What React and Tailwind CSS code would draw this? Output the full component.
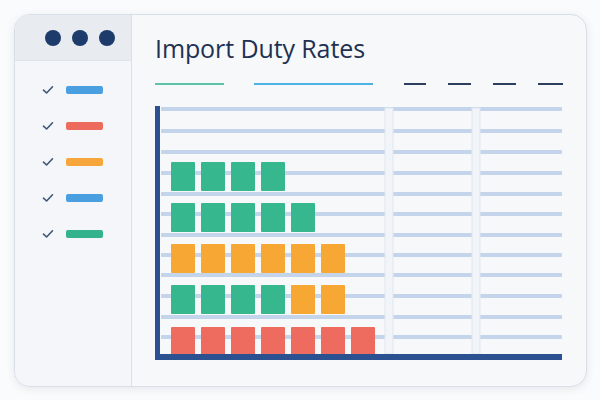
import React from "react";

const legend = ["bg-[#4a9fe0]", "bg-[#ec6b5c]", "bg-[#f6a63a]", "bg-[#4a9fe0]", "bg-[#34b38b]"];

const GREEN = "#36b78e";
const ORANGE = "#f7a733";
const RED = "#ee6c5f";

// each row of the chart, bottom row last
const rows = [
    [GREEN, GREEN, GREEN, GREEN],
    [GREEN, GREEN, GREEN, GREEN, GREEN],
    [ORANGE, ORANGE, ORANGE, ORANGE, ORANGE, ORANGE],
    [GREEN, GREEN, GREEN, GREEN, ORANGE, ORANGE],
    [RED, RED, RED, RED, RED, RED, RED],
];
const rowTops = [57, 98, 139, 180, 222];
const gridYs = [4, 26, 47, 68, 89, 109, 130, 150, 170, 191, 212, 232];

function Check() {
    return (
        <svg width="12" height="10" viewBox="0 0 12 10" fill="none">
            <path d="M1.5 5.2 L4.6 8 L10.5 1.8" stroke="#3f5676" strokeWidth="1.6" strokeLinecap="round" strokeLinejoin="round"/>
        </svg>
    );
}

function Chart() {
    return (
        <svg width="408" height="256" viewBox="0 0 408 256" className="block">
            {gridYs.map(y => (
                <rect key={y} x="6" y={y - 2} width="401" height="4" rx="1" fill="#c4d4ea"/>
            ))}
            {[230, 317].map(x => (
                <rect key={x} x={x} y="3" width="8" height="246" fill="#f1f4f8" stroke="#e1e7ef" strokeWidth="1"/>
            ))}
            {rows.map((row, i) => row.map((c, j) => (
                <rect key={i + "-" + j} x={16 + j * 30} y={rowTops[i]} width="24" height={i === 4 ? 28 : 29} rx="1" fill={c}/>
            )))}
            <rect x="0" y="1" width="5" height="254" fill="#2c5190"/>
            <rect x="0" y="249" width="407" height="6" fill="#2c5190"/>
        </svg>
    );
}

export default function App() {
    return (
        <div className="w-[600px] h-[400px] bg-[#fafbfc] p-[14px] pb-[13px] pr-[13px]" style={{fontFamily: '"Open Sans", "Liberation Sans", sans-serif'}}>
            <div className="flex h-full rounded-[16px] border border-[#d8dfe8] bg-[#f6f8fa] shadow-[0_2px_8px_rgba(40,60,90,0.10)] overflow-hidden">
                <div className="w-[117px] flex flex-col border-r border-[#d9e0e8] bg-[#f4f6f9]">
                    <div className="h-[46px] flex items-center justify-center gap-[11px] bg-[#e8ecf1] border-b border-[#dfe5ec] pl-[14px]">
                        <div className="w-[16px] h-[16px] rounded-full bg-[#1d3b6b]"/>
                        <div className="w-[16px] h-[16px] rounded-full bg-[#1d3b6b]"/>
                        <div className="w-[16px] h-[16px] rounded-full bg-[#1d3b6b]"/>
                    </div>
                    <div className="flex flex-col gap-[28px] pt-[25px] pl-[27px]">
                        {legend.map((c, i) => (
                            <div key={i} className="flex items-center gap-[12px] h-[8px]">
                                <Check/>
                                <div className={"w-[37px] h-[8px] rounded-[2px] " + c}/>
                            </div>
                        ))}
                    </div>
                </div>
                <div className="flex-1 flex flex-col pl-[23px] pt-[17px]">
                    <h1 className="text-[25px] leading-[33px] text-[#1f3152] tracking-[-0.1px]">Import Duty Rates</h1>
                    <div className="flex items-center h-[2px] mt-[18px]">
                        <div className="w-[69px] h-[2px] bg-[#5ec3a9]"/>
                        <div className="w-[119px] h-[2px] bg-[#4db3e2] ml-[30px]"/>
                        <div className="w-[22px] h-[2px] bg-[#2d3e5e] ml-[31px]"/>
                        <div className="w-[23px] h-[2px] bg-[#2d3e5e] ml-[22px]"/>
                        <div className="w-[23px] h-[2px] bg-[#2d3e5e] ml-[22px]"/>
                        <div className="w-[25px] h-[2px] bg-[#2d3e5e] ml-[22px]"/>
                    </div>
                    <div className="mt-[20px]">
                        <Chart/>
                    </div>
                </div>
            </div>
        </div>
    );
}
